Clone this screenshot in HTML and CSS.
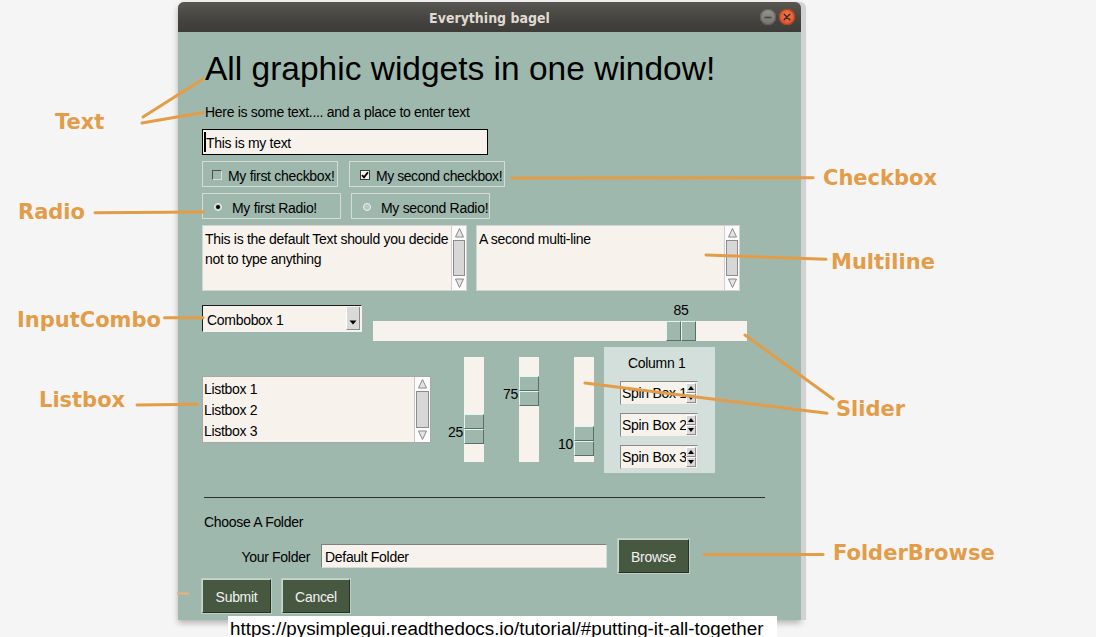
FILE: index.html
```html
<!DOCTYPE html>
<html>
<head>
<meta charset="utf-8">
<title>Everything bagel</title>
<link rel="stylesheet" href="styles.css">
</head>
<body>
<div class="desk">
  <div class="window">
    <div class="titlebar">
      <span></span>
      <span class="wtitle">Everything bagel</span>
      <div class="wbtns">
        <span class="wbtn wmin"><svg width="16" height="16" viewBox="0 0 16 16"><path d="M4.5 8.5h7" stroke="#4a4844" stroke-width="1.6"/></svg></span>
        <span class="wbtn wclose"><svg width="16" height="16" viewBox="0 0 16 16"><path d="M5.2 5.2l5.6 5.6M10.8 5.2l-5.6 5.6" stroke="#3c2a22" stroke-width="1.5" stroke-linecap="round"/></svg></span>
      </div>
    </div>
    <div class="wbody">
      <div class="heading">All graphic widgets in one window!</div>
      <div class="t14 sub">Here is some text.... and a place to enter text</div>
      <div class="t14 main-input"><span class="caret"></span>This is my text</div>

      <div class="row chk-row">
        <div class="opt w136"><span class="checkbox"></span><span class="t14 opt-text">My first checkbox!</span></div>
        <div class="opt w155"><span class="checkbox checked"><svg width="8" height="8" viewBox="0 0 8 8"><path d="M1 4.2l2 2.2L7 1.2" fill="none" stroke="#000" stroke-width="1.8"/></svg></span><span class="t14 opt-text">My second checkbox!</span></div>
      </div>

      <div class="row radio-row">
        <div class="opt w139"><span class="radio on"><span class="dot"></span></span><span class="t14 opt-text rtext">My first Radio!</span></div>
        <div class="opt w139"><span class="radio"></span><span class="t14 opt-text rtext">My second Radio!</span></div>
      </div>

      <div class="row ml-row">
        <div class="multiline w265">
          <div class="t14 ml-text">This is the default Text should you decide<br>not to type anything</div>
          <div class="vscroll">
            <span class="sb-arrow"><svg width="11" height="11" viewBox="0 0 11 11"><path d="M5.5 1.5L9.5 10H1.5Z" fill="#e4e4e4" stroke="#8a8a8a"/></svg></span>
            <span class="sb-thumb"></span>
            <span class="sb-arrow"><svg width="11" height="11" viewBox="0 0 11 11"><path d="M5.5 9.5L9.5 1H1.5Z" fill="#e4e4e4" stroke="#8a8a8a"/></svg></span>
          </div>
        </div>
        <div class="multiline w264">
          <div class="t14 ml-text">A second multi-line</div>
          <div class="vscroll">
            <span class="sb-arrow"><svg width="11" height="11" viewBox="0 0 11 11"><path d="M5.5 1.5L9.5 10H1.5Z" fill="#e4e4e4" stroke="#8a8a8a"/></svg></span>
            <span class="sb-thumb"></span>
            <span class="sb-arrow"><svg width="11" height="11" viewBox="0 0 11 11"><path d="M5.5 9.5L9.5 1H1.5Z" fill="#e4e4e4" stroke="#8a8a8a"/></svg></span>
          </div>
        </div>
      </div>

      <div class="row combo-row">
        <div class="combo">
          <span class="t14 combo-text">Combobox 1</span>
          <span class="combo-btn"><svg width="8" height="5" viewBox="0 0 8 5"><path d="M0.5 0.5h7L4 4.5Z" fill="#000"/></svg></span>
        </div>
        <div class="hslider">
          <div class="t14 hs-label" style="margin-left:293px">85</div>
          <div class="hs-trough">
            <div class="handle-h" style="margin-left:293px"><span class="half"></span><span class="half"></span></div>
          </div>
        </div>
      </div>

      <div class="row lower-row">
        <div class="listbox">
          <div class="t14 lb-items">
            <div>Listbox 1</div>
            <div>Listbox 2</div>
            <div>Listbox 3</div>
          </div>
          <div class="vscroll lb-scroll">
            <span class="sb-arrow"><svg width="11" height="11" viewBox="0 0 11 11"><path d="M5.5 1.5L9.5 10H1.5Z" fill="#e4e4e4" stroke="#8a8a8a"/></svg></span>
            <span class="sb-thumb"></span>
            <span class="sb-arrow"><svg width="11" height="11" viewBox="0 0 11 11"><path d="M5.5 9.5L9.5 1H1.5Z" fill="#e4e4e4" stroke="#8a8a8a"/></svg></span>
          </div>
        </div>

        <div class="vslider vs1">
          <div class="vs-labels"><span class="t14 vs-label" style="margin-top:67px">25</span></div>
          <div class="vs-trough"><div class="handle-v" style="margin-top:57px"><span class="half"></span><span class="half"></span></div></div>
        </div>
        <div class="vslider vsn">
          <div class="vs-labels"><span class="t14 vs-label" style="margin-top:29px">75</span></div>
          <div class="vs-trough"><div class="handle-v" style="margin-top:19px"><span class="half"></span><span class="half"></span></div></div>
        </div>
        <div class="vslider vsn">
          <div class="vs-labels"><span class="t14 vs-label" style="margin-top:79px">10</span></div>
          <div class="vs-trough"><div class="handle-v" style="margin-top:69px"><span class="half"></span><span class="half"></span></div></div>
        </div>

        <div class="column1">
          <div class="t14 col-title">Column 1</div>
          <div class="spin"><span class="t14 spin-text">Spin Box 1</span><span class="spin-arrows"><span class="sa"><svg width="6" height="4" viewBox="0 0 6 4"><path d="M3 0L6 4H0Z" fill="#000"/></svg></span><span class="sa"><svg width="6" height="4" viewBox="0 0 6 4"><path d="M0 0H6L3 4Z" fill="#000"/></svg></span></span></div>
          <div class="spin"><span class="t14 spin-text">Spin Box 2</span><span class="spin-arrows"><span class="sa"><svg width="6" height="4" viewBox="0 0 6 4"><path d="M3 0L6 4H0Z" fill="#000"/></svg></span><span class="sa"><svg width="6" height="4" viewBox="0 0 6 4"><path d="M0 0H6L3 4Z" fill="#000"/></svg></span></span></div>
          <div class="spin"><span class="t14 spin-text">Spin Box 3</span><span class="spin-arrows"><span class="sa"><svg width="6" height="4" viewBox="0 0 6 4"><path d="M3 0L6 4H0Z" fill="#000"/></svg></span><span class="sa"><svg width="6" height="4" viewBox="0 0 6 4"><path d="M0 0H6L3 4Z" fill="#000"/></svg></span></span></div>
        </div>
      </div>

      <div class="separator"></div>
      <div class="t14 choose">Choose A Folder</div>

      <div class="row folder-row">
        <div class="t14 folder-label">Your Folder</div>
        <div class="t14 folder-input">Default Folder</div>
        <div class="t14 btn browse">Browse</div>
      </div>

      <div class="row btn-row">
        <div class="t14 btn submit">Submit</div>
        <div class="t14 btn cancel">Cancel</div>
      </div>
    </div>
  </div>

  <svg class="annot" width="1096" height="637" viewBox="0 0 1096 637">
    <g stroke="#e39c47" stroke-width="3" stroke-linecap="round" fill="none">
      <path d="M143 117L203 79"/>
      <path d="M142 123L203 112.5"/>
      <path d="M95 212.7L203 212"/>
      <path d="M164.5 317.7L203 317.7"/>
      <path d="M137 405L197 404.3"/>
      <path d="M512 178L813 177.7"/>
      <path d="M706 255L826 259.3"/>
      <path d="M745 335L833 399"/>
      <path d="M585 383L827 413.3"/>
      <path d="M704 554.5L823 554.5"/>
    </g>
    <path d="M177 593.5H189" stroke="#e8b27a" stroke-width="2"/>
  </svg>

  <div class="lbl l-text">Text</div>
  <div class="lbl l-radio">Radio</div>
  <div class="lbl l-combo">InputCombo</div>
  <div class="lbl l-list">Listbox</div>
  <div class="lbl l-check">Checkbox</div>
  <div class="lbl l-multi">Multiline</div>
  <div class="lbl l-slider">Slider</div>
  <div class="lbl l-folder">FolderBrowse</div>

  <div class="url">https://pysimplegui.readthedocs.io/tutorial/#putting-it-all-together</div>
</div>
</body>
</html>
```

FILE: styles.css
```css
html, body {
  margin: 0;
  padding: 0;
}
body {
  background: #f5f5f5;
  font-family: "Liberation Sans", Arial, sans-serif;
  color: #000;
}
.desk {
  position: relative;
  width: 1096px;
  height: 637px;
  overflow: hidden;
  background: #f5f5f5;
}

/* ---------- window ---------- */
.window {
  position: absolute;
  left: 178px;
  top: 2px;
  width: 623px;
  height: 618px;
  background: #9fb8ad;
  border-radius: 6px 6px 0 0;
  box-shadow: 5px 0 0 0 #d2d2d2, 0 3px 6px rgba(0, 0, 0, 0.28);
  display: flex;
  flex-direction: column;
}
.titlebar {
  height: 30px;
  flex: none;
  background: linear-gradient(#595752, #45433f 60%, #3d3c38);
  border-radius: 6px 6px 0 0;
  display: grid;
  grid-template-columns: 1fr auto 1fr;
  align-items: center;
}
.wtitle {
  font-family: "DejaVu Sans Condensed", "DejaVu Sans", sans-serif;
  font-stretch: condensed;
  font-weight: bold;
  font-size: 14px;
  color: #dfdbd2;
  padding-top: 1px;
}
.wbtns {
  justify-self: end;
  display: flex;
  gap: 3px;
  padding-right: 6px;
}
.wbtn {
  width: 16px;
  height: 16px;
  border-radius: 50%;
  display: flex;
}
.wmin {
  background: linear-gradient(#95938e, #75736e);
  box-shadow: inset 0 0 0 1px #5f5d59;
}
.wclose {
  background: radial-gradient(circle at 50% 40%, #f47a4e, #e2532a 70%, #c8451f);
  box-shadow: inset 0 0 0 1px #b3421f;
}

.wbody {
  flex: 1;
  display: flex;
  flex-direction: column;
  align-items: flex-start;
  padding-left: 24px;
}

.t14 {
  font-size: 14px;
  letter-spacing: -0.3px;
  line-height: 20px;
  white-space: nowrap;
}

.heading {
  margin-top: 17px;
  font-size: 33.5px;
  line-height: 40px;
  padding-left: 3px;
  white-space: nowrap;
}
.sub {
  margin-top: 13px;
  padding-left: 3px;
}
.main-input {
  margin-top: 7px;
  width: 286px;
  height: 26px;
  box-sizing: border-box;
  border: 1px solid #000;
  background: #f7f3ec;
  display: flex;
  align-items: center;
  padding: 2px 0 0 1px;
}
.caret {
  width: 2px;
  height: 20px;
  background: #000;
  margin-top: -2px;
}

.row {
  display: flex;
  align-items: flex-start;
}

/* checkbox & radio */
.chk-row {
  margin-top: 6px;
  gap: 11px;
}
.radio-row {
  margin-top: 6px;
  gap: 10px;
}
.opt {
  box-sizing: border-box;
  height: 26px;
  border: 1px solid #d6dbd4;
  display: flex;
  align-items: center;
  padding-top: 3px;
}
.w136 { width: 136px; }
.w155 { width: 156px; }
.w139 { width: 139px; }
.checkbox {
  box-sizing: border-box;
  width: 10px;
  height: 10px;
  margin-left: 9px;
  margin-top: -2px;
  border: 1px solid;
  border-color: #4e4e4e #dcdcdc #dcdcdc #4e4e4e;
  display: flex;
  align-items: center;
  justify-content: center;
}
.w155 .checkbox { margin-left: 10px; }
.w155 .opt-text { letter-spacing: -0.45px; }
.checkbox.checked {
  background: #f7f3ec;
  border-color: #3a3a3a;
}
.opt-text {
  margin-left: 6px;
}
.radio {
  box-sizing: border-box;
  width: 8px;
  height: 8px;
  margin-left: 11px;
  margin-top: -2px;
  border-radius: 50%;
  border: 1px solid #f2f2f0;
  background: #b9c9c2;
  display: flex;
  align-items: center;
  justify-content: center;
}
.radio .dot {
  width: 4px;
  height: 4px;
  border-radius: 50%;
  background: #000;
}
.rtext {
  margin-left: 10px;
}

/* multiline */
.ml-row {
  margin-top: 6px;
  gap: 9px;
}
.multiline {
  box-sizing: border-box;
  height: 66px;
  border: 1px solid #d3d3d3;
  background: #f7f3ec;
  display: flex;
}
.w265 { width: 265px; }
.w264 { width: 264px; }
.ml-text {
  flex: 1;
  padding: 3px 0 0 2px;
  overflow: hidden;
}
.vscroll {
  width: 15px;
  flex: none;
  box-sizing: border-box;
  display: flex;
  flex-direction: column;
  background: #fbfbfb;
  border-left: 1px solid #cfcfcf;
}
.sb-arrow {
  height: 13px;
  flex: none;
  display: flex;
  align-items: center;
  justify-content: center;
}
.sb-thumb {
  flex: 1;
  margin: 1px 1px;
  background: #d7d7d7;
  border: 1px solid #8c8c8c;
}

/* combo + horizontal slider */
.combo-row {
  margin-top: 11px;
}
.combo {
  margin-top: 3px;
  box-sizing: border-box;
  width: 160px;
  height: 27px;
  border: 1px solid;
  border-color: #1c1c1c #f4f4f4 #f4f4f4 #1c1c1c;
  background: #f7f3ec;
  display: flex;
  align-items: stretch;
}
.combo-text {
  flex: 1;
  padding: 4px 0 0 4px;
}
.combo-btn {
  width: 14px;
  margin: 1px 1px 1px 0;
  box-sizing: border-box;
  background: #d9d9d9;
  border-left: 1px solid #ffffff;
  border-right: 1px solid #8d8d8d;
  border-bottom: 1px solid #8d8d8d;
  display: flex;
  align-items: flex-end;
  justify-content: center;
  padding-bottom: 4px;
}
.hslider {
  margin-left: 11px;
  width: 374px;
  display: flex;
  flex-direction: column;
}
.hs-label {
  width: 30px;
  text-align: center;
  line-height: 16px;
  margin-bottom: 3px;
}
.hs-trough {
  height: 20px;
  background: #f7f3ec;
  display: flex;
}
.handle-h {
  width: 30px;
  height: 20px;
  display: flex;
}
.handle-h .half,
.handle-v .half {
  flex: 1;
  box-sizing: border-box;
  background: #9fb8ad;
  border: 1px solid;
  border-color: #dff8ee #5e6d66 #5e6d66 #dff8ee;
}

/* lower row */
.lower-row {
  margin-top: 6px;
}
.listbox {
  margin-top: 29px;
  box-sizing: border-box;
  width: 229px;
  height: 67px;
  border: 1px solid #a8a8a8;
  background: #f7f3ec;
  display: flex;
}
.lb-items {
  flex: 1;
  padding: 2px 0 0 1px;
  line-height: 21px;
}
.lb-scroll {
  width: 16px;
  border-left: 1px solid #c8c8c8;
}
.vslider {
  margin-top: 10px;
  display: flex;
}
.vs1 { margin-left: 13px; }
.vsn { margin-left: 15px; }
.vs-labels {
  width: 19px;
  margin-right: 1px;
  display: flex;
  flex-direction: column;
  align-items: flex-end;
}
.vs-label {
  line-height: 16px;
}
.vs-trough {
  width: 20px;
  height: 105px;
  background: #f7f3ec;
}
.handle-v {
  width: 20px;
  height: 30px;
  display: flex;
  flex-direction: column;
}

.column1 {
  margin-left: 10px;
  box-sizing: border-box;
  width: 111px;
  height: 126px;
  background: #d3dfda;
  padding: 6px 0 0 16px;
  display: flex;
  flex-direction: column;
  gap: 8px;
}
.col-title {
  padding-left: 8px;
}
.spin {
  box-sizing: border-box;
  width: 78px;
  height: 24px;
  border: 1px solid;
  border-color: #8a8a8a #d9d9d9 #d9d9d9 #8a8a8a;
  background: #f7f3ec;
  display: flex;
  align-items: center;
}
.spin-text {
  flex: 1;
  padding-left: 1px;
  overflow: hidden;
}
.spin-arrows {
  width: 10px;
  height: 20px;
  margin-right: 1px;
  display: flex;
  flex-direction: column;
}
.sa {
  flex: 1;
  box-sizing: border-box;
  background: #d9d9d9;
  border: 1px solid;
  border-color: #ffffff #8d8d8d #8d8d8d #ffffff;
  display: flex;
  align-items: center;
  justify-content: center;
}

/* bottom */
.separator {
  margin-top: 24px;
  margin-left: 2px;
  width: 561px;
  height: 1px;
  background: #2e2e2e;
}
.choose {
  margin-top: 14px;
  padding-left: 2px;
}
.folder-row {
  margin-top: 7px;
  height: 34px;
  align-items: center;
}
.folder-label {
  width: 108px;
  text-align: right;
  padding-top: 2px;
}
.folder-input {
  margin-left: 11px;
  box-sizing: border-box;
  width: 286px;
  height: 24px;
  border: 1px solid;
  border-color: #7f7f7f #dadada #dadada #7f7f7f;
  background: #f7f3ec;
  padding: 2px 0 0 3px;
}
.btn {
  box-sizing: border-box;
  height: 34px;
  background: #475841;
  color: #f2f2f2;
  border: 1px solid;
  border-color: #cdd4ca #283224 #283224 #cdd4ca;
  box-shadow: 0 0 0 1px rgba(220, 226, 218, 0.5);
  display: flex;
  align-items: center;
  justify-content: center;
  padding-top: 2px;
}
.browse {
  margin-left: 11px;
  width: 71px;
}
.btn-row {
  margin-top: 6px;
  gap: 11px;
}
.submit { width: 69px; }
.cancel { width: 68px; }

/* annotations */
.annot {
  position: absolute;
  left: 0;
  top: 0;
  pointer-events: none;
}
.lbl {
  position: absolute;
  font-family: "DejaVu Sans", sans-serif;
  font-weight: bold;
  font-size: 21px;
  line-height: 24px;
  color: #e39c47;
  white-space: nowrap;
}
.l-text { left: 55px; top: 110px; }
.l-radio { left: 18px; top: 200px; }
.l-combo { left: 17px; top: 308px; }
.l-list { left: 39px; top: 388px; }
.l-check { left: 823px; top: 166px; }
.l-multi { left: 831px; top: 250px; }
.l-slider { left: 836px; top: 397px; }
.l-folder { left: 833px; top: 541px; }

.url {
  position: absolute;
  left: 228px;
  top: 616px;
  width: 549px;
  height: 21px;
  background: #ffffff;
  font-family: "Liberation Sans", Arial, sans-serif;
  font-size: 18.8px;
  line-height: 21px;
  padding: 2px 0 0 2px;
  box-sizing: border-box;
  white-space: nowrap;
  overflow: hidden;
}
```
